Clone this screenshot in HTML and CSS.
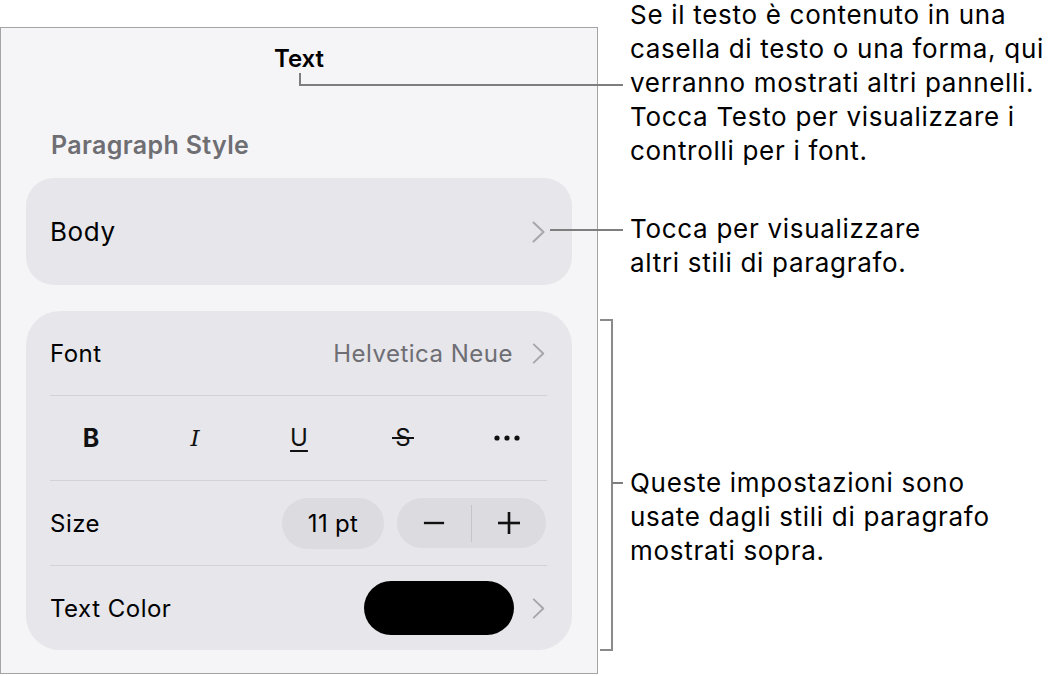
FILE: index.html
```html
<!DOCTYPE html>
<html lang="it">
<head>
<meta charset="utf-8">
<title>Text</title>
<link rel="stylesheet" href="styles.css">
</head>
<body>
<div class="stage">
  <section class="panel">
    <header class="panel-title">Text</header>
    <h2 class="section-label">Paragraph Style</h2>

    <div class="card style-card">
      <span class="style-name">Body</span>
      <svg class="chevron" viewBox="0 0 13 22" width="13" height="22"><polyline points="1.5,1.5 11.5,11 1.5,20.5"/></svg>
    </div>

    <div class="card settings-card">
      <div class="row">
        <span class="label">Font</span>
        <span class="value">Helvetica Neue</span>
        <svg class="chevron" viewBox="0 0 13 22" width="13" height="21"><polyline points="1.5,1.5 11.5,11 1.5,20.5"/></svg>
      </div>
      <hr class="divider">
      <div class="row format-row">
        <span class="fmt fmt-bold">B</span>
        <span class="fmt fmt-italic">I</span>
        <span class="fmt fmt-underline">U</span>
        <span class="fmt fmt-strike">S</span>
        <span class="fmt fmt-more">
          <svg viewBox="0 0 26 6" width="26" height="6"><circle cx="3" cy="3" r="2.6"/><circle cx="13" cy="3" r="2.6"/><circle cx="23" cy="3" r="2.6"/></svg>
        </span>
      </div>
      <hr class="divider">
      <div class="row">
        <span class="label">Size</span>
        <span class="size-pill">11 pt</span>
        <div class="stepper">
          <span class="step step-minus"><svg viewBox="0 0 24 24" width="24" height="24"><line x1="1" y1="12" x2="23" y2="12"/></svg></span>
          <span class="step-sep"></span>
          <span class="step step-plus"><svg viewBox="0 0 24 24" width="24" height="24"><line x1="1" y1="12" x2="23" y2="12"/><line x1="12" y1="1" x2="12" y2="23"/></svg></span>
        </div>
      </div>
      <hr class="divider">
      <div class="row">
        <span class="label">Text Color</span>
        <span class="swatch"></span>
        <svg class="chevron chevron-color" viewBox="0 0 13 22" width="13" height="21"><polyline points="1.5,1.5 11.5,11 1.5,20.5"/></svg>
      </div>
    </div>
  </section>

  <!-- leader lines -->
  <div class="leader leader-title-v"></div>
  <div class="leader leader-title-h"></div>
  <div class="leader leader-body"></div>
  <div class="leader bracket"></div>
  <div class="leader bracket-tick"></div>

  <p class="note note-title">Se il testo è contenuto in una<br>casella di testo o una forma, qui<br>verranno mostrati altri pannelli.<br>Tocca Testo per visualizzare i<br>controlli per i font.</p>
  <p class="note note-body">Tocca per visualizzare<br>altri stili di paragrafo.</p>
  <p class="note note-settings">Queste impostazioni sono<br>usate dagli stili di paragrafo<br>mostrati sopra.</p>
</div>
</body>
</html>
```

FILE: styles.css
```css
* {
  box-sizing: border-box;
  margin: 0;
  padding: 0;
}

html,
body {
  width: 1056px;
  height: 676px;
  overflow: hidden;
  background: #ffffff;
}

body {
  font-family: Inter, "Noto Sans", sans-serif;
  color: #000000;
}

.stage {
  position: relative;
  width: 1056px;
  height: 676px;
  padding-top: 27px;
}

/* ---------- inspector panel ---------- */

.panel {
  width: 598px;
  height: 647px;
  border: 1px solid #a4a4a4;
  background: #f5f5f7;
  padding: 16px 25px 0;
  display: flex;
  flex-direction: column;
}

.panel-title {
  font-size: 24px;
  font-weight: 600;
  line-height: 30px;
  text-align: center;
}

.section-label {
  margin-top: 56px;
  padding-left: 25px;
  font-size: 25px;
  font-weight: 600;
  line-height: 30px;
  color: #6e6e73;
  letter-spacing: 0.35px;
}

.card {
  background: #e6e6eb;
}

.style-card {
  margin-top: 18px;
  height: 107px;
  border-radius: 28px;
  display: flex;
  align-items: center;
  justify-content: space-between;
  padding: 0 27px 0 24px;
}

.style-name {
  font-size: 26px;
  letter-spacing: 0.6px;
}

.chevron {
  display: block;
  fill: none;
  stroke: #a6a6ab;
  stroke-width: 2;
  stroke-linecap: round;
  stroke-linejoin: round;
}

.settings-card {
  margin-top: 26px;
  height: 339px;
  border-radius: 34px;
}

.divider {
  border: 0;
  height: 1px;
  background: #d1d1d6;
  margin: 0 25px 0 24px;
}

.row {
  height: 84px;
  display: flex;
  align-items: center;
  padding: 0 27px 0 24px;
  font-size: 24px;
  letter-spacing: 0.5px;
}

.value {
  margin-left: auto;
  margin-right: 19px;
  color: #6e6e73;
}

/* bold / italic / underline / strike / more */
.format-row {
  display: grid;
  grid-template-columns: repeat(5, 104px);
  padding: 0 0 0 13px;
  justify-items: center;
  letter-spacing: 0;
}

.fmt {
  display: flex;
  align-items: center;
  justify-content: center;
  height: 30px;
  font-size: 25px;
  line-height: 30px;
  color: #111;
}

.fmt-bold {
  font-weight: 700;
}

.fmt-italic {
  font-family: "DejaVu Serif", serif;
  font-style: italic;
  font-size: 23px;
}

.fmt-underline {
  font-size: 24px;
  text-decoration: underline;
  text-decoration-thickness: 2px;
  text-underline-offset: 4px;
}

.fmt-strike {
  position: relative;
  font-size: 24px;
}

.fmt-strike::after {
  content: "";
  position: absolute;
  left: -3px;
  right: -3px;
  top: 14px;
  height: 2px;
  background: #111;
}

.fmt-more svg {
  display: block;
  fill: #111;
}

/* size controls */
.size-pill {
  margin-left: auto;
  width: 102px;
  height: 51px;
  border-radius: 26px;
  background: #dbdbe0;
  display: flex;
  align-items: center;
  justify-content: center;
  letter-spacing: 0.3px;
}

.stepper {
  margin-left: 13px;
  margin-right: -1px;
  width: 149px;
  height: 50px;
  border-radius: 25px;
  background: #dbdbe0;
  display: flex;
  align-items: center;
}

.step {
  flex: 1;
  display: flex;
  align-items: center;
  justify-content: center;
}

.step svg {
  display: block;
  stroke: #111;
  stroke-width: 2.6;
}

.step-minus svg {
  width: 22px;
}

.step-sep {
  width: 1px;
  height: 37px;
  background: #c4c4c9;
}

/* text colour */
.swatch {
  margin-left: auto;
  margin-right: 18px;
  width: 150px;
  height: 54px;
  border-radius: 27px;
  background: #000;
}

/* ---------- callouts ---------- */

.leader {
  position: absolute;
  background: #7e7e7e;
}

.leader-title-v {
  left: 299px;
  top: 73px;
  width: 2px;
  height: 13px;
}

.leader-title-h {
  left: 299px;
  top: 84px;
  width: 324px;
  height: 2px;
}

.leader-body {
  left: 550px;
  top: 229px;
  width: 73px;
  height: 2px;
}

.bracket {
  left: 600px;
  top: 319px;
  width: 13px;
  height: 332px;
  background: transparent;
  border: 2px solid #8a8a8a;
  border-left: 0;
}

.bracket-tick {
  left: 612px;
  top: 482px;
  width: 11px;
  height: 2px;
}

.note {
  position: absolute;
  left: 630px;
  font-size: 26px;
  line-height: 34px;
  color: #000;
  letter-spacing: 0.7px;
  white-space: nowrap;
}

.note-title {
  top: -2px;
}

.note-body {
  top: 212px;
}

.note-settings {
  top: 466px;
}
```
